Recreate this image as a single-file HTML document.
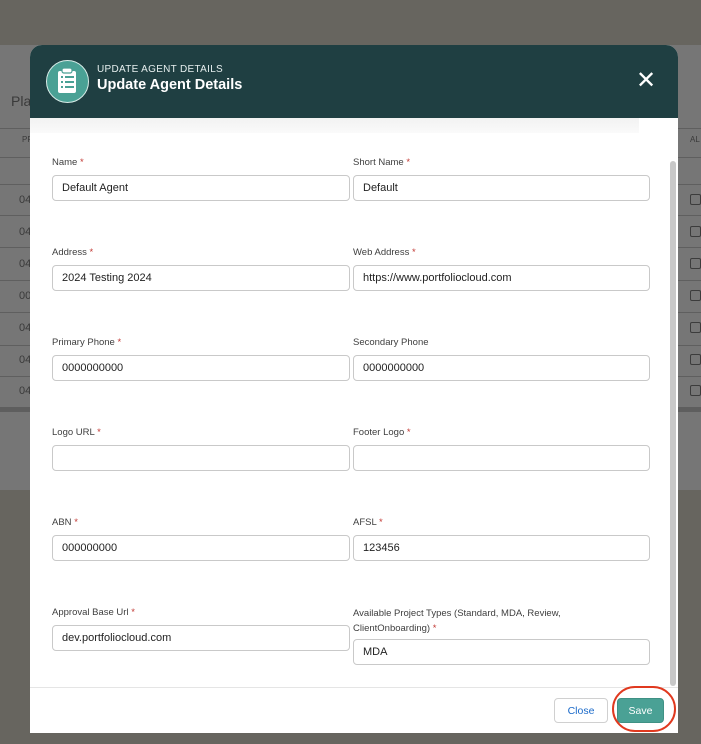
<!DOCTYPE html>
<html><head><style>
*{box-sizing:border-box;margin:0;padding:0}
body{width:701px;height:744px;overflow:hidden;background:#67655f;font-family:"Liberation Sans",sans-serif;position:relative}
.bgp{position:absolute;left:0;top:45px;width:701px;height:445px;background:#767676}
.row{position:absolute;left:0;width:701px;border-top:1px solid #5f5f5f}
.bgt{position:absolute;color:#3a3a3a;font-size:11px}
.cb{position:absolute;left:690px;width:11px;height:11px;border:1px solid #3c3c3c;border-radius:2px}
.modal{position:absolute;left:30px;top:45px;width:648px;height:688px;background:#fff;border-radius:12px 12px 0 0;overflow:hidden}
.hdr{height:73px;background:#1f3f42;position:relative}
.ico{position:absolute;left:16px;top:15px;width:43px;height:43px;border-radius:50%;background:#4aa195;border:1.5px solid #d8ece8}
.sub{position:absolute;left:67px;top:19px;color:#e6eeee;font-size:10px;letter-spacing:.3px}
.ttl{position:absolute;left:67px;top:32px;color:#fff;font-size:14.5px;font-weight:bold}
.x{position:absolute;left:606px;top:24px;color:#fff;font-size:24px;line-height:24px}
.strip{position:absolute;left:0;top:73px;width:609px;height:15px;background:linear-gradient(#f2f2f2,#fafafa)}
.lbl{position:absolute;font-size:9.5px;color:#3e3e3e;line-height:13px}
.lbl b{color:#c23934;font-weight:normal}
.inp{position:absolute;height:26px;border:1px solid #c9c9c9;border-radius:4px;font-size:11px;color:#222;padding:6px 9px}
.sb{position:absolute;left:640px;top:116px;width:6px;height:525px;background:#c8c8c8;border-radius:3px}
.ft{position:absolute;left:0;top:642px;width:648px;border-top:1px solid #e5e5e5}
.btn{position:absolute;top:653px;height:25px;border-radius:4px;font-size:10.5px;text-align:center;line-height:24px}
</style></head><body>
<div class="bgp"></div>
<div class="bgt" style="left:11px;top:93px;font-size:14px">Pla</div>
<div class="row" style="top:128px"></div>
<div class="bgt" style="left:22px;top:135px;font-size:8px">PF</div>
<div class="bgt" style="left:690px;top:135px;font-size:8px">AL</div>
<div class="row" style="top:157px"></div>
<div class="row" style="top:184px"></div><div class="row" style="top:215px"></div><div class="row" style="top:247px"></div><div class="row" style="top:280px"></div><div class="row" style="top:312px"></div><div class="row" style="top:345px"></div><div class="row" style="top:376px"></div>
<div style="position:absolute;left:0;top:407px;width:701px;height:5px;background:#5e5e5e"></div>
<div class="bgt" style="left:19px;top:194px">04</div><div class="bgt" style="left:19px;top:226px">04</div><div class="bgt" style="left:19px;top:258px">04</div><div class="bgt" style="left:19px;top:290px">00</div><div class="bgt" style="left:19px;top:322px">04</div><div class="bgt" style="left:19px;top:354px">04</div><div class="bgt" style="left:19px;top:385px">04</div>
<div class="cb" style="top:194px"></div><div class="cb" style="top:226px"></div><div class="cb" style="top:258px"></div><div class="cb" style="top:290px"></div><div class="cb" style="top:322px"></div><div class="cb" style="top:354px"></div><div class="cb" style="top:385px"></div>
<div class="modal">
<div class="hdr">
<div class="ico"><svg width="40" height="40" viewBox="0 0 40 40"><rect x="11" y="10" width="18" height="22" rx="2" fill="#fff"/><rect x="15" y="7" width="10" height="5" rx="2" fill="#fff" stroke="#4aa195" stroke-width="1.2"/><g fill="#4aa195"><rect x="14" y="15" width="2" height="2"/><rect x="18" y="15" width="9" height="2"/><rect x="14" y="20" width="2" height="2"/><rect x="18" y="20" width="9" height="2"/><rect x="14" y="25" width="2" height="2"/><rect x="18" y="25" width="9" height="2"/></g></svg></div>
<div class="sub">UPDATE AGENT DETAILS</div>
<div class="ttl">Update Agent Details</div>
<div class="x">✕</div>
</div>
<div class="strip"></div>
<div class="lbl" style="left:22px;top:111px">Name <b>*</b></div>
<div class="inp" style="left:22px;top:130px;width:298px">Default Agent</div>
<div class="lbl" style="left:323px;top:111px">Short Name <b>*</b></div>
<div class="inp" style="left:323px;top:130px;width:297px">Default</div>
<div class="lbl" style="left:22px;top:201px">Address <b>*</b></div>
<div class="inp" style="left:22px;top:220px;width:298px">2024 Testing 2024</div>
<div class="lbl" style="left:323px;top:201px">Web Address <b>*</b></div>
<div class="inp" style="left:323px;top:220px;width:297px">https://www.portfoliocloud.com</div>
<div class="lbl" style="left:22px;top:291px">Primary Phone <b>*</b></div>
<div class="inp" style="left:22px;top:310px;width:298px">0000000000</div>
<div class="lbl" style="left:323px;top:291px">Secondary Phone</div>
<div class="inp" style="left:323px;top:310px;width:297px">0000000000</div>
<div class="lbl" style="left:22px;top:381px">Logo URL <b>*</b></div>
<div class="inp" style="left:22px;top:400px;width:298px"></div>
<div class="lbl" style="left:323px;top:381px">Footer Logo <b>*</b></div>
<div class="inp" style="left:323px;top:400px;width:297px"></div>
<div class="lbl" style="left:22px;top:471px">ABN <b>*</b></div>
<div class="inp" style="left:22px;top:490px;width:298px">000000000</div>
<div class="lbl" style="left:323px;top:471px">AFSL <b>*</b></div>
<div class="inp" style="left:323px;top:490px;width:297px">123456</div>
<div class="lbl" style="left:22px;top:561px">Approval Base Url <b>*</b></div>
<div class="inp" style="left:22px;top:580px;width:298px">dev.portfoliocloud.com</div>
<div class="lbl" style="left:323px;top:561px;width:240px;line-height:15px">Available Project Types (Standard, MDA, Review, ClientOnboarding) <b>*</b></div>
<div class="inp" style="left:323px;top:594px;width:297px">MDA</div>
<div class="sb"></div>
<div class="ft"></div>
<div class="btn" style="left:524px;width:54px;border:1px solid #d0d0d0;color:#1b6ac9">Close</div>
<div class="btn" style="left:587px;width:47px;background:#4aa195;color:#fff;border:1px solid #3f9184">Save</div>
</div>
<div style="position:absolute;left:612px;top:686px;width:64px;height:46px;border:2.5px solid #e0391f;border-radius:23px"></div>
</body></html>
